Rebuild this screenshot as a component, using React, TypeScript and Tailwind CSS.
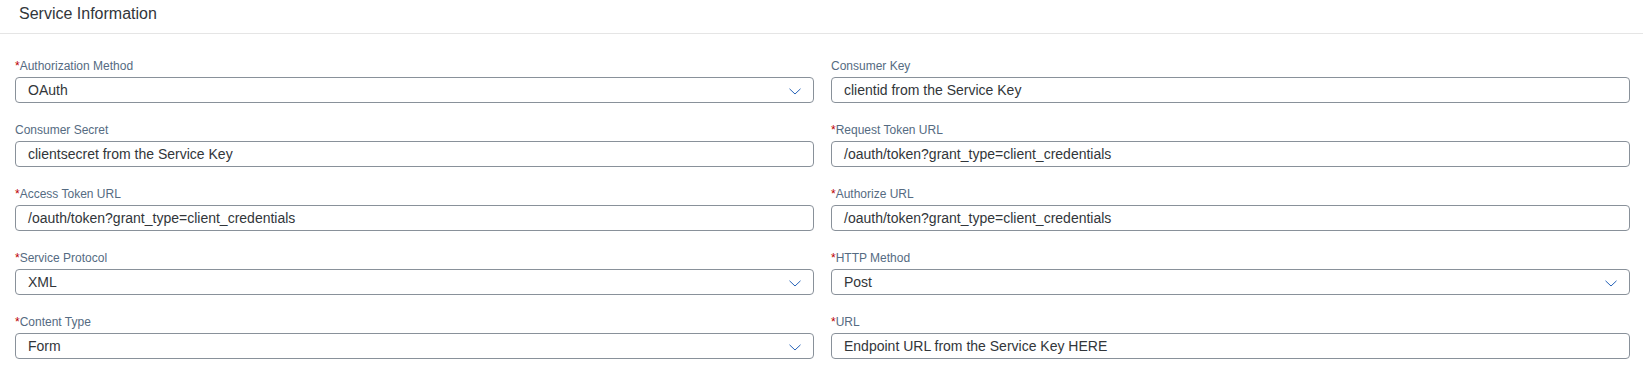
import React from "react";

type Field = { label: string; value: string; required?: boolean; select?: boolean };

const left: Field[] = [
  { label: "Authorization Method", value: "OAuth", required: true, select: true },
  { label: "Consumer Secret", value: "clientsecret from the Service Key" },
  { label: "Access Token URL", value: "/oauth/token?grant_type=client_credentials", required: true },
  { label: "Service Protocol", value: "XML", required: true, select: true },
  { label: "Content Type", value: "Form", required: true, select: true },
];

const right: Field[] = [
  { label: "Consumer Key", value: "clientid from the Service Key" },
  { label: "Request Token URL", value: "/oauth/token?grant_type=client_credentials", required: true },
  { label: "Authorize URL", value: "/oauth/token?grant_type=client_credentials", required: true },
  { label: "HTTP Method", value: "Post", required: true, select: true },
  { label: "URL", value: "Endpoint URL from the Service Key HERE", required: true },
];

function Chevron() {
  return (
    <svg width="12" height="7" viewBox="0 0 12 7" fill="none" className="mt-[3px]">
      <path d="M0.5 0.8 L6 6 L11.5 0.8" stroke="#2563b8" strokeWidth="1" />
    </svg>
  );
}

function FieldView({ f }: { f: Field }) {
  return (
    <div className="flex flex-col pb-[19px]">
      <div className="h-[16px] text-[12px] leading-[16px] text-[#556b82]">
        {f.required && <span className="text-[#bb0000]">*</span>}
        {f.label}
      </div>
      <div className="mt-[3px] flex h-[26px] items-center justify-between rounded-[4px] border border-[#89919a] bg-white pl-[12px] pr-[12px]">
        <span className="text-[14px] leading-[18px] text-[#32363a]">{f.value}</span>
        {f.select && <Chevron />}
      </div>
    </div>
  );
}

export default function App() {
  return (
    <div className="min-h-[378px] w-full bg-white" style={{ fontFamily: '"Liberation Sans", Arial, sans-serif' }}>
      <div className="h-[34px] border-b border-[#e5e5e5] pl-[19px] pt-[4px]">
        <div className="text-[16px] leading-[20px] text-[#32363a]">Service Information</div>
      </div>
      <div className="grid grid-cols-2 gap-x-[17px] pl-[15px] pr-[13px] pt-[24px]">
        <div className="flex flex-col">
          {left.map((f) => (
            <FieldView key={f.label} f={f} />
          ))}
        </div>
        <div className="flex flex-col">
          {right.map((f) => (
            <FieldView key={f.label} f={f} />
          ))}
        </div>
      </div>
    </div>
  );
}
